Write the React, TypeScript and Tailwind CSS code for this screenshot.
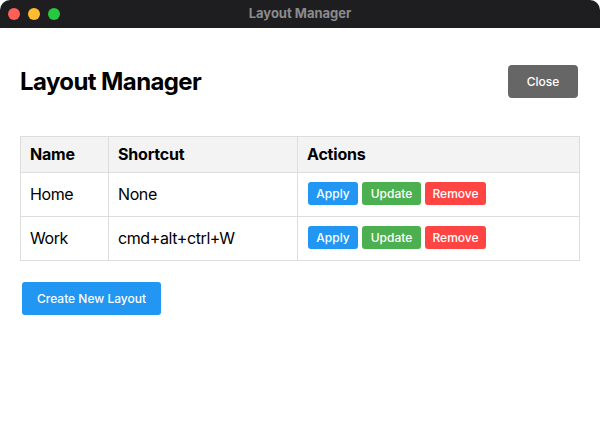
import React from "react";

const rows = [
  { name: "Home", shortcut: "None" },
  { name: "Work", shortcut: "cmd+alt+ctrl+W" },
];

export default function App() {
  return (
    <div
      className="w-[600px] h-[428px] bg-white overflow-hidden flex flex-col"
      style={{ fontFamily: "Inter, 'Noto Sans', sans-serif" }}
    >
      <div className="relative h-[28px] bg-[#1e1e20] rounded-t-[10px] flex items-center justify-center shrink-0">
        <div className="absolute left-[8px] top-[8px] flex gap-[8px]">
          <span className="w-[12px] h-[12px] rounded-full bg-[#fe5f57]" />
          <span className="w-[12px] h-[12px] rounded-full bg-[#febc2e]" />
          <span className="w-[12px] h-[12px] rounded-full bg-[#28c840]" />
        </div>
        <span className="text-[13px] font-bold text-[#8b8b8d]">Layout Manager</span>
      </div>
      <div className="px-[20px] pt-[37px]">
        <div className="flex items-center justify-between pr-[2px]">
          <h1 className="text-[24px] font-bold text-black leading-[33px] tracking-[-0.6px]">Layout Manager</h1>
          <button className="w-[70px] h-[33px] rounded-[4px] bg-[#666666] text-white text-[12px] font-medium">
            Close
          </button>
        </div>
        <table className="mt-[38px] w-[560px] border-collapse text-[16px] text-black">
          <thead>
            <tr className="bg-[#f3f3f3] h-[36px]">
              <th className="border border-[#dddddd] text-left font-bold px-[9px] pb-[1px] w-[88px] tracking-[-0.2px]">Name</th>
              <th className="border border-[#dddddd] text-left font-bold px-[9px] pb-[1px] w-[189px] tracking-[-0.2px]">Shortcut</th>
              <th className="border border-[#dddddd] text-left font-bold px-[9px] pb-[1px] tracking-[-0.2px]">Actions</th>
            </tr>
          </thead>
          <tbody>
            {rows.map((r) => (
              <tr key={r.name} className="h-[44px]">
                <td className="border border-[#dddddd] px-[9px] pb-[2px] tracking-[-0.4px]">{r.name}</td>
                <td className="border border-[#dddddd] px-[9px] pb-[2px] tracking-[-0.4px]">{r.shortcut}</td>
                <td className="border border-[#dddddd] px-[10px] pb-[2px]">
                  <div className="flex gap-[4px] text-[12px] font-medium text-white">
                    <button className="h-[23px] w-[50px] rounded-[3px] bg-[#2196f3]">Apply</button>
                    <button className="h-[23px] w-[59px] rounded-[3px] bg-[#4caf50]">Update</button>
                    <button className="h-[23px] w-[61px] rounded-[3px] bg-[#ff4444]">Remove</button>
                  </div>
                </td>
              </tr>
            ))}
          </tbody>
        </table>
        <button className="mt-[21px] ml-[2px] w-[139px] h-[33px] rounded-[3px] bg-[#2196f3] text-white text-[12px] font-medium">
          Create New Layout
        </button>
      </div>
    </div>
  );
}
